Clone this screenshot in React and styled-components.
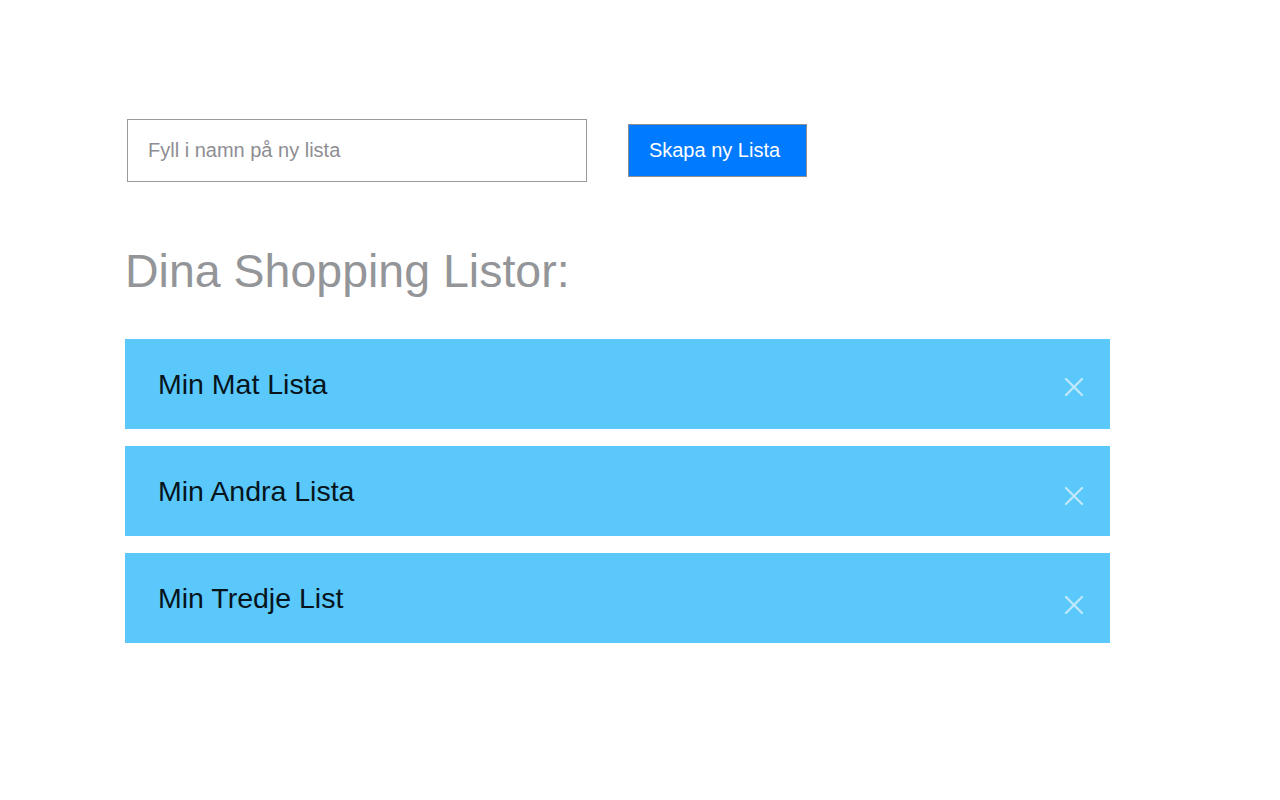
import React from 'react';
import styled, { createGlobalStyle } from 'styled-components';

const GlobalStyle = createGlobalStyle`
	body {
		margin: 0;
		background: #ffffff;
		font-family: 'Liberation Sans', Arial, sans-serif;
	}
`;

const Page = styled.div`
	padding: 119px 0 0 125px;
`;

const Form = styled.form`
	display: flex;
	align-items: center;
	gap: 41px;
	margin: 0;
`;

const NameInput = styled.input`
	box-sizing: border-box;
	width: 460px;
	height: 63px;
	margin-left: 2px;
	padding: 0 20px;
	border: 1px solid #9a9a9a;
	border-radius: 0;
	font-family: 'Liberation Sans', Arial, sans-serif;
	font-size: 20px;
	color: #333;
	outline: none;

	&::placeholder {
		color: #8e8e93;
	}
`;

const CreateButton = styled.button`
	box-sizing: border-box;
	width: 179px;
	height: 53px;
	padding: 0 6px 0 0;
	border: 1px solid #8e8e93;
	background: #007aff;
	color: #ffffff;
	font-family: 'Liberation Sans', Arial, sans-serif;
	font-size: 20px;
	cursor: pointer;
`;

const Heading = styled.h1`
	margin: 66px 0 0;
	font-size: 46.5px;
	line-height: 46px;
	font-weight: 400;
	color: #939598;
`;

const Lists = styled.ul`
	list-style: none;
	margin: 45px 0 0;
	padding: 0;
	width: 985px;
	display: flex;
	flex-direction: column;
	gap: 17px;
`;

const ListRow = styled.li`
	height: 90px;
	display: flex;
	align-items: center;
	justify-content: space-between;
	padding: 0 26px 0 33px;
	background: #5ac8fa;
`;

const ListName = styled.span`
	font-size: 28.5px;
	color: #06141c;
	margin-top: 1px;
`;

const RemoveButton = styled.button`
	display: flex;
	padding: 0;
	margin-top: ${(p) => p.$drop}px;
	border: none;
	background: transparent;
	cursor: pointer;
`;

const CloseIcon = () => (
	<svg width="20" height="20" viewBox="0 0 20 20">
		<path
			d="M2 2 L18 18 M18 2 L2 18"
			stroke="#bde8fd"
			strokeWidth="2.4"
			strokeLinecap="round"
		/>
	</svg>
);

const shoppingLists = [
	{ id: 1, name: 'Min Mat Lista', drop: 6 },
	{ id: 2, name: 'Min Andra Lista', drop: 10 },
	{ id: 3, name: 'Min Tredje List', drop: 14 },
];

export default function App() {
	return (
		<>
			<GlobalStyle />
			<Page>
				<Form onSubmit={(e) => e.preventDefault()}>
					<NameInput placeholder="Fyll i namn på ny lista" />
					<CreateButton type="submit">Skapa ny Lista</CreateButton>
				</Form>
				<Heading>Dina Shopping Listor:</Heading>
				<Lists>
					{shoppingLists.map((list) => (
						<ListRow key={list.id}>
							<ListName>{list.name}</ListName>
							<RemoveButton type="button" $drop={list.drop}>
								<CloseIcon />
							</RemoveButton>
						</ListRow>
					))}
				</Lists>
			</Page>
		</>
	);
}
